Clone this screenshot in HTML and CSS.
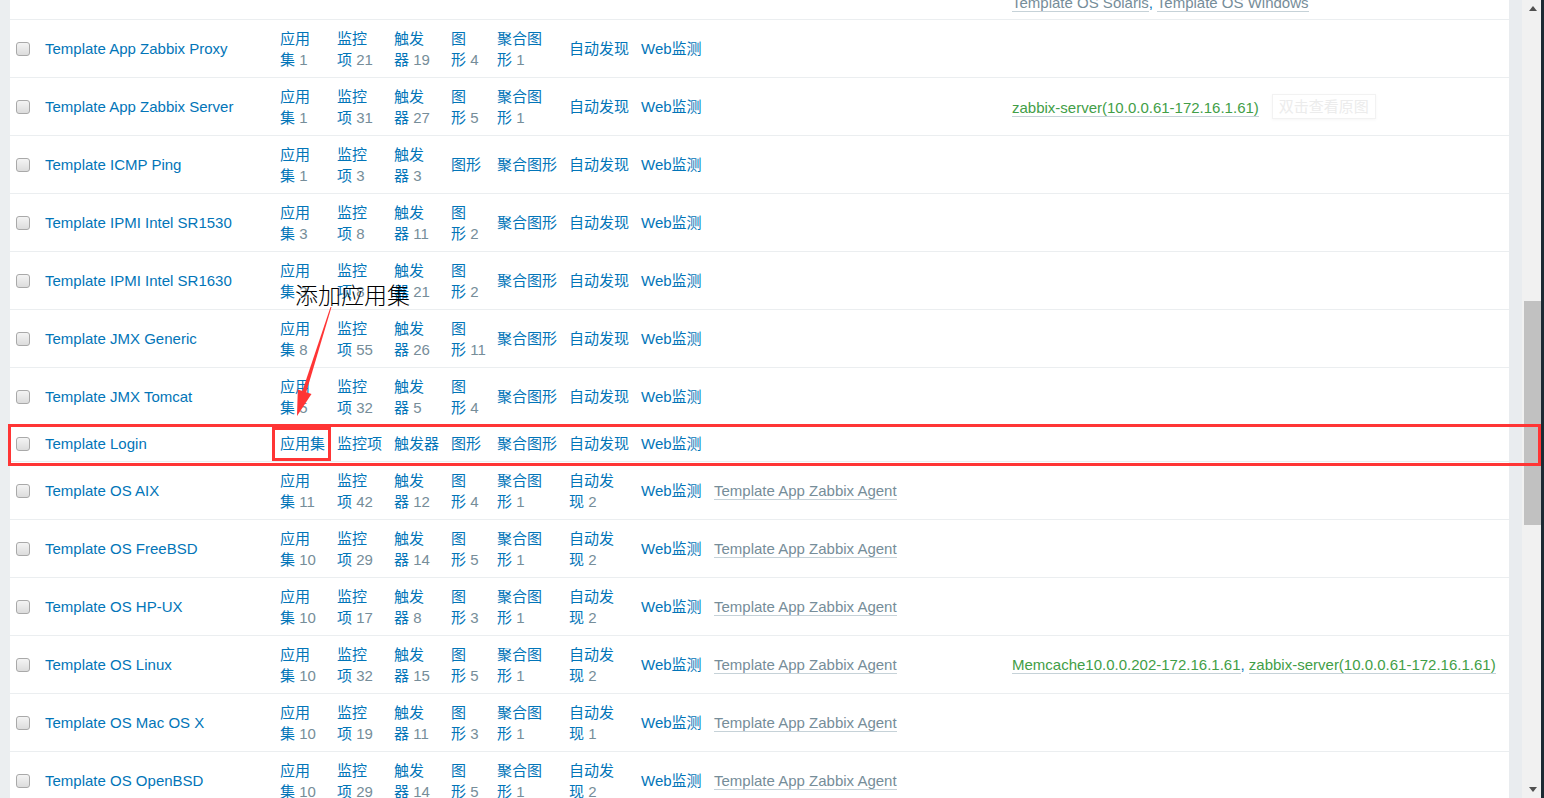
FILE: index.html
```html
<!DOCTYPE html>
<html lang="zh-CN">
<head>
<meta charset="utf-8">
<title>模板</title>
<link rel="stylesheet" href="styles.css">
</head>
<body>
<div class="page">
  <div class="gutter"></div>
  <main class="content">
    <div class="row partial">
      <div class="hosts"><a class="lnk gray">Template OS Solaris</a>, <a class="lnk gray">Template OS Windows</a></div>
    </div>

    <div class="row">
      <div class="chk"><span class="box"></span></div>
      <div class="name">Template App Zabbix Proxy</div>
      <div>应用<br>集 <span class="cnt">1</span></div>
      <div>监控<br>项 <span class="cnt">21</span></div>
      <div>触发<br>器 <span class="cnt">19</span></div>
      <div>图<br>形 <span class="cnt">4</span></div>
      <div>聚合图<br>形 <span class="cnt">1</span></div>
      <div>自动发现</div>
      <div>Web监测</div>
    </div>

    <div class="row">
      <div class="chk"><span class="box"></span></div>
      <div class="name">Template App Zabbix Server</div>
      <div>应用<br>集 <span class="cnt">1</span></div>
      <div>监控<br>项 <span class="cnt">31</span></div>
      <div>触发<br>器 <span class="cnt">27</span></div>
      <div>图<br>形 <span class="cnt">5</span></div>
      <div>聚合图<br>形 <span class="cnt">1</span></div>
      <div>自动发现</div>
      <div>Web监测</div>
      <div class="hosts"><a class="lnk green">zabbix-server(10.0.0.61-172.16.1.61)</a><span class="tip">双击查看原图</span></div>
    </div>

    <div class="row">
      <div class="chk"><span class="box"></span></div>
      <div class="name">Template ICMP Ping</div>
      <div>应用<br>集 <span class="cnt">1</span></div>
      <div>监控<br>项 <span class="cnt">3</span></div>
      <div>触发<br>器 <span class="cnt">3</span></div>
      <div>图形</div>
      <div>聚合图形</div>
      <div>自动发现</div>
      <div>Web监测</div>
    </div>

    <div class="row">
      <div class="chk"><span class="box"></span></div>
      <div class="name">Template IPMI Intel SR1530</div>
      <div>应用<br>集 <span class="cnt">3</span></div>
      <div>监控<br>项 <span class="cnt">8</span></div>
      <div>触发<br>器 <span class="cnt">11</span></div>
      <div>图<br>形 <span class="cnt">2</span></div>
      <div>聚合图形</div>
      <div>自动发现</div>
      <div>Web监测</div>
    </div>

    <div class="row">
      <div class="chk"><span class="box"></span></div>
      <div class="name">Template IPMI Intel SR1630</div>
      <div>应用<br>集 <span class="cnt">3</span></div>
      <div>监控<br>项 <span class="cnt">8</span></div>
      <div>触发<br>器 <span class="cnt">21</span></div>
      <div>图<br>形 <span class="cnt">2</span></div>
      <div>聚合图形</div>
      <div>自动发现</div>
      <div>Web监测</div>
    </div>

    <div class="row">
      <div class="chk"><span class="box"></span></div>
      <div class="name">Template JMX Generic</div>
      <div>应用<br>集 <span class="cnt">8</span></div>
      <div>监控<br>项 <span class="cnt">55</span></div>
      <div>触发<br>器 <span class="cnt">26</span></div>
      <div>图<br>形 <span class="cnt">11</span></div>
      <div>聚合图形</div>
      <div>自动发现</div>
      <div>Web监测</div>
    </div>

    <div class="row">
      <div class="chk"><span class="box"></span></div>
      <div class="name">Template JMX Tomcat</div>
      <div>应用<br>集 <span class="cnt">5</span></div>
      <div>监控<br>项 <span class="cnt">32</span></div>
      <div>触发<br>器 <span class="cnt">5</span></div>
      <div>图<br>形 <span class="cnt">4</span></div>
      <div>聚合图形</div>
      <div>自动发现</div>
      <div>Web监测</div>
    </div>

    <div class="row single">
      <div class="chk"><span class="box"></span></div>
      <div class="name">Template Login</div>
      <div>应用集</div>
      <div>监控项</div>
      <div>触发器</div>
      <div>图形</div>
      <div>聚合图形</div>
      <div>自动发现</div>
      <div>Web监测</div>
    </div>

    <div class="row">
      <div class="chk"><span class="box"></span></div>
      <div class="name">Template OS AIX</div>
      <div>应用<br>集 <span class="cnt">11</span></div>
      <div>监控<br>项 <span class="cnt">42</span></div>
      <div>触发<br>器 <span class="cnt">12</span></div>
      <div>图<br>形 <span class="cnt">4</span></div>
      <div>聚合图<br>形 <span class="cnt">1</span></div>
      <div>自动发<br>现 <span class="cnt">2</span></div>
      <div>Web监测</div>
      <div class="tpl"><a class="lnk gray">Template App Zabbix Agent</a></div>
    </div>

    <div class="row">
      <div class="chk"><span class="box"></span></div>
      <div class="name">Template OS FreeBSD</div>
      <div>应用<br>集 <span class="cnt">10</span></div>
      <div>监控<br>项 <span class="cnt">29</span></div>
      <div>触发<br>器 <span class="cnt">14</span></div>
      <div>图<br>形 <span class="cnt">5</span></div>
      <div>聚合图<br>形 <span class="cnt">1</span></div>
      <div>自动发<br>现 <span class="cnt">2</span></div>
      <div>Web监测</div>
      <div class="tpl"><a class="lnk gray">Template App Zabbix Agent</a></div>
    </div>

    <div class="row">
      <div class="chk"><span class="box"></span></div>
      <div class="name">Template OS HP-UX</div>
      <div>应用<br>集 <span class="cnt">10</span></div>
      <div>监控<br>项 <span class="cnt">17</span></div>
      <div>触发<br>器 <span class="cnt">8</span></div>
      <div>图<br>形 <span class="cnt">3</span></div>
      <div>聚合图<br>形 <span class="cnt">1</span></div>
      <div>自动发<br>现 <span class="cnt">2</span></div>
      <div>Web监测</div>
      <div class="tpl"><a class="lnk gray">Template App Zabbix Agent</a></div>
    </div>

    <div class="row">
      <div class="chk"><span class="box"></span></div>
      <div class="name">Template OS Linux</div>
      <div>应用<br>集 <span class="cnt">10</span></div>
      <div>监控<br>项 <span class="cnt">32</span></div>
      <div>触发<br>器 <span class="cnt">15</span></div>
      <div>图<br>形 <span class="cnt">5</span></div>
      <div>聚合图<br>形 <span class="cnt">1</span></div>
      <div>自动发<br>现 <span class="cnt">2</span></div>
      <div>Web监测</div>
      <div class="tpl"><a class="lnk gray">Template App Zabbix Agent</a></div>
      <div class="hosts"><a class="lnk green">Memcache10.0.0.202-172.16.1.61</a>, <a class="lnk green">zabbix-server(10.0.0.61-172.16.1.61)</a></div>
    </div>

    <div class="row">
      <div class="chk"><span class="box"></span></div>
      <div class="name">Template OS Mac OS X</div>
      <div>应用<br>集 <span class="cnt">10</span></div>
      <div>监控<br>项 <span class="cnt">19</span></div>
      <div>触发<br>器 <span class="cnt">11</span></div>
      <div>图<br>形 <span class="cnt">3</span></div>
      <div>聚合图<br>形 <span class="cnt">1</span></div>
      <div>自动发<br>现 <span class="cnt">1</span></div>
      <div>Web监测</div>
      <div class="tpl"><a class="lnk gray">Template App Zabbix Agent</a></div>
    </div>

    <div class="row">
      <div class="chk"><span class="box"></span></div>
      <div class="name">Template OS OpenBSD</div>
      <div>应用<br>集 <span class="cnt">10</span></div>
      <div>监控<br>项 <span class="cnt">29</span></div>
      <div>触发<br>器 <span class="cnt">14</span></div>
      <div>图<br>形 <span class="cnt">5</span></div>
      <div>聚合图<br>形 <span class="cnt">1</span></div>
      <div>自动发<br>现 <span class="cnt">2</span></div>
      <div>Web监测</div>
      <div class="tpl"><a class="lnk gray">Template App Zabbix Agent</a></div>
    </div>
  </main>
  <div class="gutter-r"></div>
  <div class="scrollbar">
    <span class="sb-arrow up"></span>
    <span class="thumb"></span>
    <span class="sb-arrow down"></span>
  </div>
  <div class="edge"></div>

  <svg class="annot" width="1544" height="798" viewBox="0 0 1544 798">
    <rect x="9.5" y="425.5" width="1530" height="39" fill="none" stroke="#ff3535" stroke-width="3"/>
    <rect x="273.5" y="428.5" width="56" height="31" fill="none" stroke="#ff3535" stroke-width="3"/>
    <polygon points="330.5,307 331.5,307 306,393 302,392" fill="#ff3535"/>
    <polygon points="297,416 297.8,389.5 311.5,394" fill="#ff3535"/>
  </svg>
  <div class="annot-text">添加应用集</div>
</div>
</body>
</html>
```
FILE: styles.css
```css
html, body {
  margin: 0;
  padding: 0;
  height: 100%;
  overflow: hidden;
}
body {
  font-family: "Liberation Sans", Arial, "Noto Sans CJK SC", sans-serif;
  font-size: 15px;
  color: #0275b8;
  background: #ebeef0;
}
.page {
  position: relative;
  display: flex;
  width: 1544px;
  height: 798px;
  overflow: hidden;
}
.gutter {
  width: 10px;
  flex: none;
  background: #ebeef0;
}
.content {
  width: 1499px;
  flex: none;
  background: #fff;
}
.gutter-r {
  width: 13px;
  flex: none;
  background: #e9ecef;
}
.scrollbar {
  width: 19px;
  flex: none;
  background: #f1f1f1;
  position: relative;
}
.edge {
  width: 3px;
  flex: none;
  background: #1c2a33;
}
.thumb {
  position: absolute;
  left: 2px;
  right: 0;
  top: 301px;
  height: 224px;
  background: #c1c1c1;
}
.sb-arrow {
  position: absolute;
  left: 7px;
  width: 0;
  height: 0;
  border-left: 4px solid transparent;
  border-right: 4px solid transparent;
}
.sb-arrow.up {
  top: 6px;
  border-bottom: 5px solid #505050;
}
.sb-arrow.down {
  bottom: 6px;
  border-top: 5px solid #505050;
}

.row {
  display: grid;
  grid-template-columns: 35px 235px 57px 57px 57px 46px 72px 72px 73px 298px 1fr;
  align-items: center;
  align-content: center;
  height: 58px;
  box-sizing: border-box;
  border-bottom: 1px solid #ebeef0;
  line-height: 21px;
  white-space: nowrap;
}
.row.single {
  height: 36px;
}
.row.partial {
  height: 20px;
  align-items: end;
  align-content: end;
  padding-bottom: 6px;
}
.chk {
  display: flex;
  align-items: center;
  padding-left: 6px;
}
.box {
  display: block;
  width: 12px;
  height: 12px;
  border: 1px solid #a9a9a9;
  border-radius: 3px;
  background: linear-gradient(#f4f4f4, #dcdcdc);
}
.cnt {
  color: #768d99;
}
.tpl {
  grid-column: 10;
}
.hosts {
  grid-column: 11;
}
.lnk {
  text-decoration: none;
  border-bottom: 1px solid #c6d2d8;
}
.gray {
  color: #768d99;
}
.green {
  color: #429e47;
}
.tip {
  display: inline-block;
  margin-left: 13px;
  padding: 1px 6px;
  line-height: 21px;
  border: 1px solid #f2f2f2;
  color: #ececec;
  box-shadow: 0 1px 3px rgba(0, 0, 0, 0.04);
  vertical-align: 1px;
}

.annot {
  position: absolute;
  left: 0;
  top: 0;
  pointer-events: none;
}
.annot-text {
  position: absolute;
  left: 295px;
  top: 281px;
  font-family: "Noto Sans CJK SC", sans-serif;
  font-weight: 300;
  font-size: 23px;
  line-height: 27px;
  color: #000;
  white-space: nowrap;
}
```
